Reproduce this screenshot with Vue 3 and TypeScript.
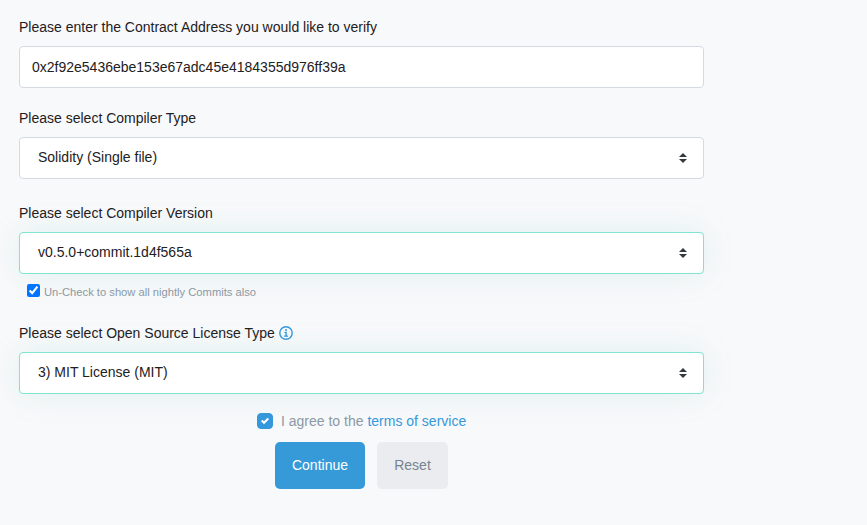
<script setup lang="ts">
import { ref } from 'vue'

const address = ref('0x2f92e5436ebe153e67adc45e4184355d976ff39a')
const nightly = ref(true)
const agreed = ref(true)
</script>

<template>
  <form class="form" @submit.prevent>
    <div class="field first">
      <label class="label">Please enter the Contract Address you would like to verify</label>
      <input v-model="address" class="control input" type="text" spellcheck="false" />
    </div>

    <div class="field type">
      <label class="label">Please select Compiler Type</label>
      <div class="control select">
        <span>Solidity (Single file)</span>
        <svg class="caret" viewBox="0 0 8 10"><path d="M4 0 0 4h8zM4 10 0 6h8z" /></svg>
      </div>
    </div>

    <div class="field version">
      <label class="label">Please select Compiler Version</label>
      <div class="control select valid">
        <span>v0.5.0+commit.1d4f565a</span>
        <svg class="caret" viewBox="0 0 8 10"><path d="M4 0 0 4h8zM4 10 0 6h8z" /></svg>
      </div>
      <label class="nightly"><input v-model="nightly" type="checkbox" /><span>Un-Check to show all nightly Commits also</span></label>
    </div>

    <div class="field license">
      <label class="label">Please select Open Source License Type
        <svg class="info" viewBox="0 0 14 14"><circle cx="7" cy="7" r="6.2" /><path d="M5.5 6.4h1.6v3.5M5 10.1h4M6.1 4h1.9" /></svg>
      </label>
      <div class="control select valid">
        <span>3) MIT License (MIT)</span>
        <svg class="caret" viewBox="0 0 8 10"><path d="M4 0 0 4h8zM4 10 0 6h8z" /></svg>
      </div>
    </div>

    <div class="agree">
      <button type="button" class="tick" :class="{ on: agreed }" aria-label="Agree" @click="agreed = !agreed">
        <svg v-if="agreed" viewBox="0 0 8 8"><path d="M6.564.75l-3.59 3.612-1.538-1.55L0 4.26l2.974 2.99L8 2.193z" /></svg>
      </button>
      <span>I agree to the <a>terms of service</a></span>
    </div>

    <div class="actions">
      <button class="btn primary" type="submit">Continue</button>
      <button class="btn soft" type="button">Reset</button>
    </div>
  </form>
</template>

<style>
body {
  background: #f8f9fb;
}
</style>

<style scoped>
.form {
  box-sizing: border-box;
  width: 723px;
  height: 525px;
  padding: 17px 19px 0;
  font: 14px/21px "Liberation Sans", Arial, sans-serif;
  color: #1e2022;
}
.label {
  display: flex;
  align-items: center;
  height: 21px;
  margin-bottom: 8px;
  white-space: pre;
}
.type { margin-top: 20px; }
.version { margin-top: 24px; }
.license { margin-top: 22px; }
.control {
  box-sizing: border-box;
  display: flex;
  align-items: center;
  width: 685px;
  height: 42px;
  border: 1px solid #d5dae2;
  border-radius: 4px;
  background: #fff;
  color: #1e2022;
  font: inherit;
}
.input {
  padding: 0 12px;
  outline: none;
}
.select {
  justify-content: space-between;
  padding: 0 16px 2px 18px;
}
.valid {
  border-color: #80e4d3;
  background-clip: padding-box;
  box-shadow: 0 0 35px rgba(0, 160, 115, 0.1);
}
.caret {
  width: 8px;
  height: 10px;
  margin-top: 2px;
  fill: #343a40;
}
.nightly {
  display: flex;
  align-items: center;
  height: 17px;
  margin: 10px 0 0 8px;
  font-size: 11.2px;
  line-height: 17px;
  color: #8c98a4;
}
.nightly input {
  width: 13px;
  height: 13px;
  margin: 0 4px 4px 0;
}
.info {
  width: 14px;
  height: 14px;
  margin-bottom: 2px;
  fill: none;
  stroke: #3498db;
  stroke-width: 1.4;
}
.agree {
  display: flex;
  align-items: center;
  height: 22px;
  margin: 16px 0 0 238px;
  color: #8c98a4;
}
.agree a { color: #3498db; }
.tick {
  display: flex;
  align-items: center;
  justify-content: center;
  width: 16px;
  height: 16px;
  margin-right: 8px;
  padding: 0;
  border: 1px solid #3498db;
  border-radius: 4px;
  background: #fff;
}
.tick.on { background: #3498db; }
.tick svg {
  width: 8px;
  height: 8px;
  flex: none;
  fill: #fff;
}
.actions {
  display: flex;
  gap: 12px;
  margin: 10px 0 0 256px;
}
.btn {
  height: 47px;
  padding: 0;
  border: 0;
  border-radius: 5px;
  font: inherit;
}
.primary {
  width: 90px;
  background: #3699d8;
  color: #fff;
}
.soft {
  width: 71px;
  background: #ebecf0;
  color: #77838f;
}
</style>
